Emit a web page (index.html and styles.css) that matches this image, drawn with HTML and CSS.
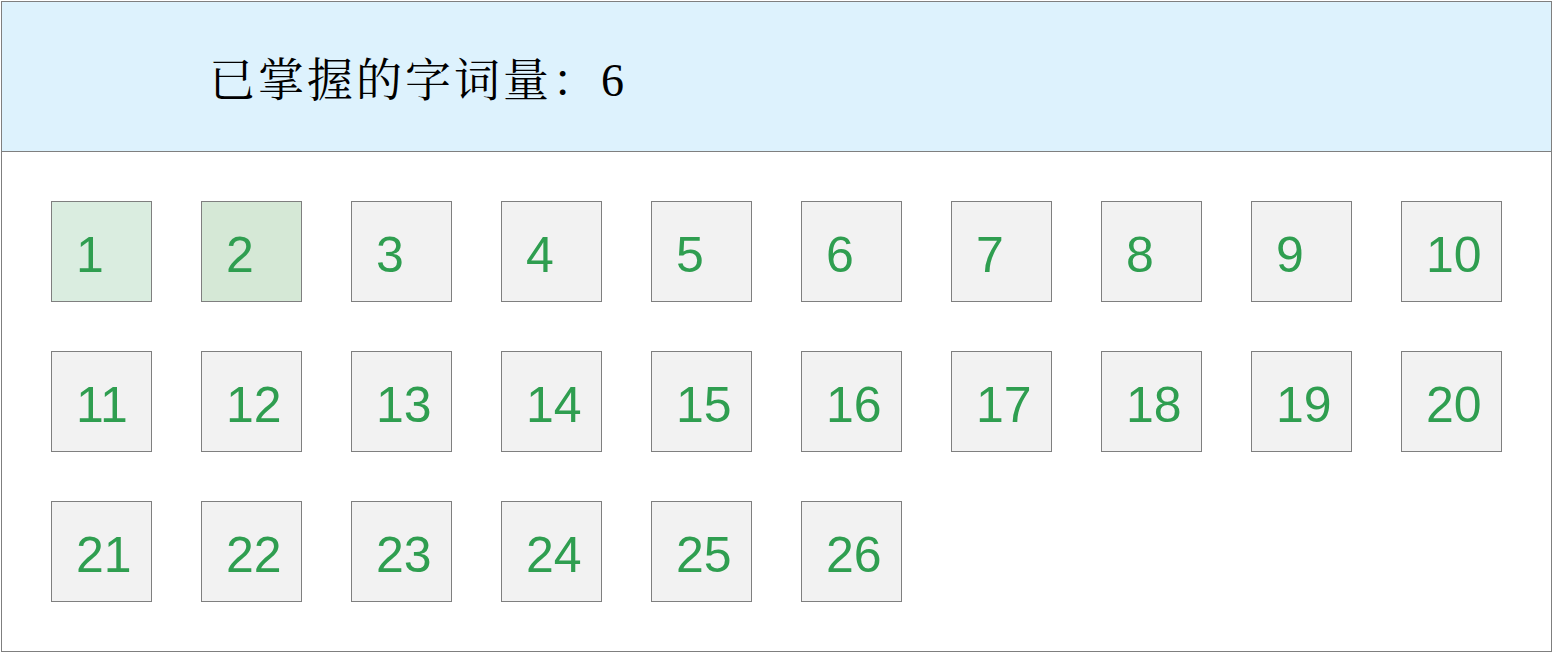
FILE: index.html
```html
<!DOCTYPE html>
<html lang="zh">
<head>
<meta charset="utf-8">
<link rel="stylesheet" href="styles.css">
</head>
<body>
<div class="frame">
  <div class="header"><span class="title">已掌握的字词量：6</span></div>
  <div class="grid">
    <div class="cell known1">1</div>
    <div class="cell known2">2</div>
    <div class="cell">3</div>
    <div class="cell">4</div>
    <div class="cell">5</div>
    <div class="cell">6</div>
    <div class="cell">7</div>
    <div class="cell">8</div>
    <div class="cell">9</div>
    <div class="cell">10</div>
    <div class="cell">11</div>
    <div class="cell">12</div>
    <div class="cell">13</div>
    <div class="cell">14</div>
    <div class="cell">15</div>
    <div class="cell">16</div>
    <div class="cell">17</div>
    <div class="cell">18</div>
    <div class="cell">19</div>
    <div class="cell">20</div>
    <div class="cell">21</div>
    <div class="cell">22</div>
    <div class="cell">23</div>
    <div class="cell">24</div>
    <div class="cell">25</div>
    <div class="cell">26</div>
  </div>
</div>
</body>
</html>
```
FILE: styles.css
```css
* { box-sizing: border-box; }
html, body { margin: 0; padding: 0; background: #ffffff; }
.frame {
  margin: 1px 0 0 1px;
  width: 1551px;
  height: 651px;
  border: 1px solid #7f7f7f;
  display: flex;
  flex-direction: column;
}
.header {
  height: 150px;
  flex: none;
  background: #ddf2fd;
  border-bottom: 1px solid #7f7f7f;
  display: flex;
  align-items: center;
  padding-left: 207px;
  padding-bottom: 2px;
}
.title {
  font-family: "Liberation Serif", "Noto Serif CJK SC", "Noto Sans CJK SC", serif;
  font-size: 46px;
  letter-spacing: 3px;
  color: #000000;
}
.grid {
  padding: 49px 0 0 49px;
  display: grid;
  grid-template-columns: repeat(10, 101px);
  grid-auto-rows: 101px;
  gap: 49px;
}
.cell {
  border: 1px solid #7f7f7f;
  background: #f2f2f2;
  color: #2f9e50;
  font-family: "Liberation Sans", Arial, sans-serif;
  font-size: 50px;
  line-height: 1;
  padding: 28px 0 0 24px;
}
.known1 { background: #daede0; }
.known2 { background: #d5e8d6; }
```
